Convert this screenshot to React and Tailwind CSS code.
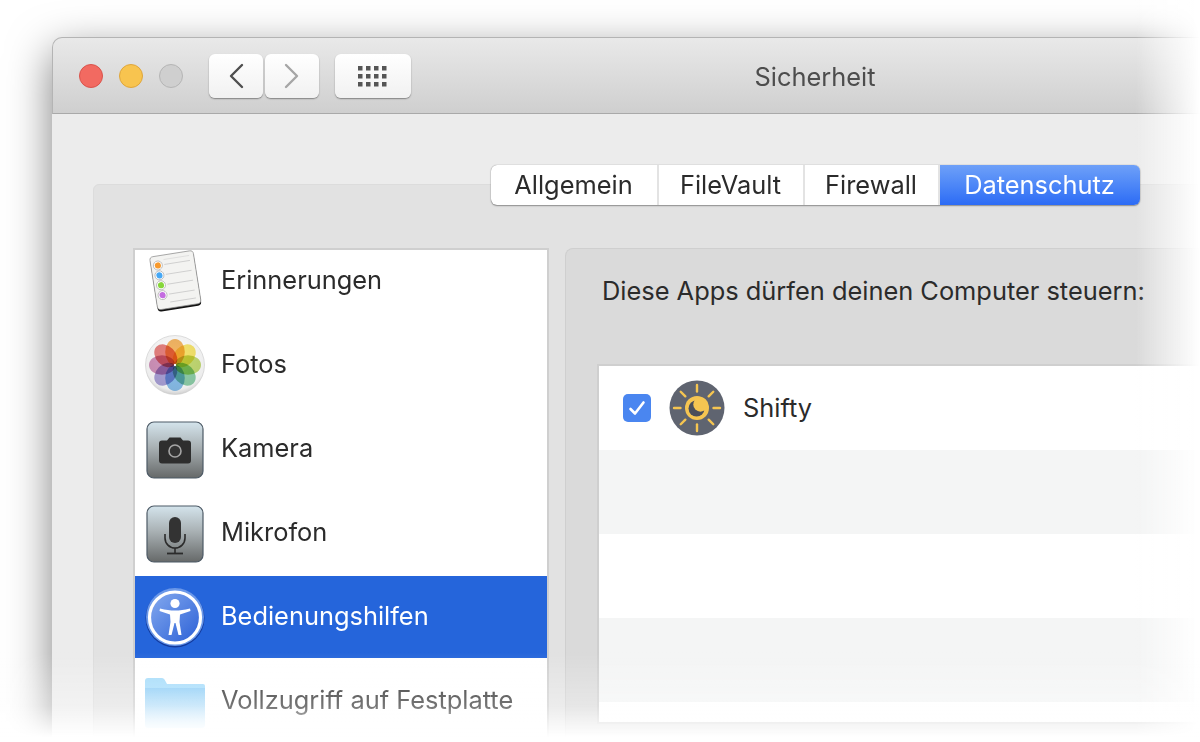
const ReminderIcon = () => (
  <svg width="62" height="62" viewBox="0 0 62 62">
    <defs>
      <linearGradient id="noteEdge" x1="0" y1="0" x2="0" y2="1">
        <stop offset="0" stopColor="#6b6b6b" />
        <stop offset="1" stopColor="#111" />
      </linearGradient>
    </defs>
    <g transform="rotate(-9 31 31)">
      <rect x="9.500" y="5" width="44" height="54" rx="3.500" fill="url(#noteEdge)" />
      <rect x="9.500" y="3.500" width="44" height="53.500" rx="3.500" fill="#f3f3f1" stroke="#8a8a8a" strokeWidth="0.7" />
      {[
        [13, "#f79a2e"],
        [23, "#46a8f5"],
        [33, "#86d63b"],
        [43, "#c46ce0"],
      ].map(([y, c]) => (
        <g key={y}>
          <circle cx="16.500" cy={y} r="4.500" fill="#fff" stroke="#a9a9a9" strokeWidth="0.7" />
          <circle cx="16.500" cy={y} r="3.100" fill={c} />
          <line x1="23" y1={y} x2="49" y2={y} stroke="#c9c9c9" strokeWidth="0.8" />
        </g>
      ))}
      <line x1="23" y1="8" x2="49" y2="8" stroke="#d5d5d5" strokeWidth="0.6" />
      <line x1="23" y1="51" x2="49" y2="51" stroke="#c9c9c9" strokeWidth="0.8" />
    </g>
  </svg>
);

const petals = ["#f5b764", "#f8e66e", "#c4dc74", "#8fd0aa", "#8ac0ec", "#aba2d9", "#d294bc", "#e8827f"];

const PhotosIcon = () => (
  <svg width="62" height="62" viewBox="0 0 62 62">
    <defs>
      <radialGradient id="photoDisc" cx="0.5" cy="0.4" r="0.65">
        <stop offset="0" stopColor="#ffffff" />
        <stop offset="0.8" stopColor="#ededed" />
        <stop offset="1" stopColor="#bcbcbc" />
      </radialGradient>
    </defs>
    <circle cx="31" cy="31" r="29.500" fill="url(#photoDisc)" stroke="#c9c9c9" strokeWidth="0.6" />
    {petals.map((c, i) => (
      <g key={c} transform={`rotate(${i * 45} 31 31)`}>
        <ellipse cx="31" cy="18" rx="9.800" ry="13" fill={c} style={{ mixBlendMode: "multiply" }} />
      </g>
    ))}
    <circle cx="31" cy="31" r="1.200" fill="#fff" />
  </svg>
);

const TileBackground = ({ id }) => (
  <>
    <defs>
      <linearGradient id={id} x1="0" y1="0" x2="0" y2="1">
        <stop offset="0" stopColor="#d4e4ec" />
        <stop offset="0.45" stopColor="#a9b1b4" />
        <stop offset="1" stopColor="#666969" />
      </linearGradient>
    </defs>
    <rect x="3" y="4" width="56" height="56" rx="7" fill={`url(#${id})`} stroke="#4d5a66" strokeWidth="1.200" />
  </>
);

const CameraIcon = () => (
  <svg width="62" height="62" viewBox="0 0 62 62">
    <TileBackground id="tileCam" />
    <path
      d="M18 22.500h5l2.500-3h11l2.500 3h5a3 3 0 0 1 3 3v17a3 3 0 0 1-3 3H18a3 3 0 0 1-3-3v-17a3 3 0 0 1 3-3z"
      fill="#2e2e2e"
    />
    <circle cx="31" cy="33" r="6" fill="#333" stroke="#a5a5a5" strokeWidth="1.600" />
  </svg>
);

const MicIcon = () => (
  <svg width="62" height="62" viewBox="0 0 62 62">
    <TileBackground id="tileMic" />
    <rect x="25" y="15" width="12" height="26" rx="6" fill="#333" />
    <path d="M21 32v4a10 10 0 0 0 20 0v-4" fill="none" stroke="#2b2b2b" strokeWidth="1.600" />
    <line x1="31" y1="46" x2="31" y2="51" stroke="#2b2b2b" strokeWidth="1.600" />
    <line x1="23" y1="51.500" x2="39" y2="51.500" stroke="#2b2b2b" strokeWidth="1.800" />
  </svg>
);

const AccessIcon = () => (
  <svg width="62" height="62" viewBox="0 0 62 62">
    <defs>
      <linearGradient id="accessFill" x1="0" y1="0" x2="1" y2="1">
        <stop offset="0" stopColor="#86abef" />
        <stop offset="1" stopColor="#2a5fd6" />
      </linearGradient>
    </defs>
    <circle cx="31" cy="32" r="29.500" fill="#123a9e" />
    <circle cx="31" cy="31" r="29" fill="#6a98ea" />
    <circle cx="31" cy="31.500" r="25.500" fill="url(#accessFill)" stroke="#fff" strokeWidth="3.200" />
    <circle cx="31" cy="17.500" r="4.600" fill="#fff" />
    <path
      d="M16 22.500C22 24 26 24.500 31 24.500S40 24 46 22.500L46.500 25 36 28.500 35.500 36 37.500 49H34.500L31.500 37H30.500L27.500 49H24.500L26.500 36 26 28.500 15.500 25Z"
      fill="#fff"
    />
  </svg>
);

const FolderIcon = () => (
  <svg className="mt-[3px]" width="62" height="50" viewBox="0 0 62 50">
    <defs>
      <linearGradient id="folderFront" x1="0" y1="0" x2="0" y2="1">
        <stop offset="0" stopColor="#8dcdf6" />
        <stop offset="1" stopColor="#e4f3fc" />
      </linearGradient>
    </defs>
    <path d="M1 3a3 3 0 0 1 3-3h14a3 3 0 0 1 2.500 1.500L23 6h36a2 2 0 0 1 2 2v6H1z" fill="#a5dcfb" />
    <path d="M1 10h60v37a3 3 0 0 1-3 3H4a3 3 0 0 1-3-3z" fill="url(#folderFront)" />
  </svg>
);

const ShiftyIcon = () => (
  <svg width="56" height="56" viewBox="0 0 56 56">
    <circle cx="28" cy="28" r="27.500" fill="#5f6470" />
    {[0, 45, 90, 135, 180, 225, 270, 315].map((a) => (
      <line
        key={a}
        x1="28"
        y1="5"
        x2="28"
        y2="11.500"
        stroke="#f5c551"
        strokeWidth="2.400"
        strokeLinecap="round"
        transform={`rotate(${a} 28 28)`}
      />
    ))}
    <circle cx="28" cy="28" r="12" fill="#f5c551" />
    <circle cx="27.500" cy="28.500" r="8" fill="#4a4e5a" />
    <circle cx="31.500" cy="24.500" r="7.200" fill="#f5c551" />
  </svg>
);

const menuItems = [
  { label: "Erinnerungen", Icon: ReminderIcon },
  { label: "Fotos", Icon: PhotosIcon },
  { label: "Kamera", Icon: CameraIcon },
  { label: "Mikrofon", Icon: MicIcon },
  { label: "Bedienungshilfen", Icon: AccessIcon, active: true },
  { label: "Vollzugriff auf Festplatte", Icon: FolderIcon },
];

const tabs = [
  { label: "Allgemein", width: "w-[168px]" },
  { label: "FileVault", width: "w-[146px]" },
  { label: "Firewall", width: "w-[135px]" },
  { label: "Datenschutz", width: "w-[200px]", active: true },
];

const App = () => {
  return (
    <div className="relative h-[742px] w-[1200px] overflow-hidden bg-white font-['Inter',sans-serif] text-[#2b2b2b]">
      <div className="pl-[52px] pt-[37px]">
        <div className="w-[1526px] rounded-t-[10px] bg-[#ececec] shadow-[0_14px_44px_rgba(0,0,0,0.5)]">
          {/* title bar */}
          <div className="relative flex h-[77px] items-start rounded-t-[10px] border-x border-b border-t border-[#b4b4b4] border-b-[#a9a9a9] bg-gradient-to-b from-[#e9e9e9] to-[#cfcfcf] pl-[26px] pt-[16px]">
            <div className="mt-[10px] flex gap-[16px]">
              <span className="h-[24px] w-[24px] rounded-full border border-[#d9534c] bg-[#f26a61]" />
              <span className="h-[24px] w-[24px] rounded-full border border-[#dfa63c] bg-[#f8c44f]" />
              <span className="h-[24px] w-[24px] rounded-full border border-[#b5b5b5] bg-[#cfcfcf]" />
            </div>
            <div className="ml-[26px] flex gap-[2px]">
              <button className="flex h-[44px] w-[54px] items-center justify-center rounded-[6px] bg-gradient-to-b from-white to-[#f1f1f1] shadow-[0_1px_1.500px_rgba(0,0,0,0.4)]">
                <svg width="16" height="26" viewBox="0 0 16 26">
                  <path d="M14 2 3 13l11 11" fill="none" stroke="#4f4f4f" strokeWidth="2.400" strokeLinecap="round" strokeLinejoin="round" />
                </svg>
              </button>
              <button className="flex h-[44px] w-[54px] items-center justify-center rounded-[6px] bg-gradient-to-b from-white to-[#f1f1f1] shadow-[0_1px_1.500px_rgba(0,0,0,0.4)]">
                <svg width="16" height="26" viewBox="0 0 16 26">
                  <path d="M2 2l11 11L2 24" fill="none" stroke="#a6a6a6" strokeWidth="2.400" strokeLinecap="round" strokeLinejoin="round" />
                </svg>
              </button>
            </div>
            <button className="ml-[16px] flex h-[44px] w-[76px] items-center justify-center rounded-[6px] bg-gradient-to-b from-white to-[#f1f1f1] shadow-[0_1px_1.500px_rgba(0,0,0,0.4)]">
              <svg width="30" height="21" viewBox="0 0 30 21" fill="#555">
                {[0, 8, 16].map((y) =>
                  [0, 8, 16, 24].map((x) => <rect key={`${x}-${y}`} x={x} y={y} width="4.500" height="4.500" />)
                )}
              </svg>
            </button>
            <span className="absolute inset-x-0 top-[24px] text-center text-[25.4px] leading-[30px] text-[#4d4d4d]">Sicherheit</span>
          </div>

          {/* body */}
          <div className="px-[41px] pb-[40px] pt-[51px]">
            <div className="relative z-10 mb-[-21px] flex justify-center">
              <div className="flex h-[40px] overflow-hidden rounded-[6px] bg-white text-[25.4px] shadow-[0_0_1px_rgba(0,0,0,0.5),0_1px_1.500px_rgba(0,0,0,0.35)]">
                {tabs.map((tab) =>
                  tab.active ? (
                    <div
                      key={tab.label}
                      className={`flex items-center justify-center bg-gradient-to-b from-[#6ea0f8] to-[#2c6bf5] text-white ${tab.width}`}
                    >
                      {tab.label}
                    </div>
                  ) : (
                    <div
                      key={tab.label}
                      className={`flex items-center justify-center border-r-2 border-[#e3e3e3] last:border-r-0 ${tab.width}`}
                    >
                      {tab.label}
                    </div>
                  )
                )}
              </div>
            </div>

            <div className="flex gap-[16px] rounded-[6px] border border-[#dcdcdc] bg-[#e2e2e2] pl-[39px] pt-[63px]">
              {/* privacy list */}
              <div className="h-[520px] w-[416px] shrink-0 overflow-hidden border-2 border-[#cfcfcf] bg-white">
                <div className="-mt-[10px] flex flex-col gap-[2px]">
                  {menuItems.map(({ label, Icon, active }) => (
                    <div
                      key={label}
                      className={`flex h-[82px] items-center gap-[15px] pl-[9px] text-[25.4px] ${active ? "bg-[#2565db] text-white" : ""}`}
                    >
                      <span className="flex w-[62px] justify-center">
                        <Icon />
                      </span>
                      <span className="pb-[2px]">{label}</span>
                    </div>
                  ))}
                </div>
              </div>

              {/* apps panel */}
              <div className="h-[520px] flex-1 rounded-tl-[8px] border-l border-t border-[#cfcfcf] bg-[#dadada] pl-[31px]">
                <p className="pl-[5px] pt-[27px] text-[25.4px] leading-[30px]">Diese Apps dürfen deinen Computer steuern:</p>
                <div className="mt-[58px] w-[900px] border-2 border-r-0 border-[#cfcfcf] bg-white">
                  <div className="flex h-[84px] items-center pl-[24px]">
                    <span className="flex h-[28px] w-[28px] items-center justify-center rounded-[5px] bg-[#4a86f0]">
                      <svg width="18" height="16" viewBox="0 0 18 16">
                        <path d="M2.500 9l4.500 4.500L15.500 2.500" fill="none" stroke="#fff" strokeWidth="2.600" strokeLinecap="round" strokeLinejoin="round" />
                      </svg>
                    </span>
                    <span className="ml-[18px] flex">
                      <ShiftyIcon />
                    </span>
                    <span className="ml-[18px] text-[25.4px]">Shifty</span>
                  </div>
                  <div className="h-[84px] bg-[#f4f5f5]" />
                  <div className="h-[84px]" />
                  <div className="h-[84px] bg-[#f4f5f5]" />
                  <div className="h-[20px]" />
                </div>
              </div>
            </div>
          </div>
        </div>
      </div>

      {/* the screenshot fades out to white along its right and bottom edges */}
      <div className="pointer-events-none absolute inset-y-0 right-0 w-[65px] bg-gradient-to-r from-transparent to-white" />
      <div className="pointer-events-none absolute inset-x-0 bottom-0 h-[90px] bg-gradient-to-b from-transparent via-[rgba(255,255,255,0.35)] via-60% to-white to-95%" />
    </div>
  );
};

export default App;
